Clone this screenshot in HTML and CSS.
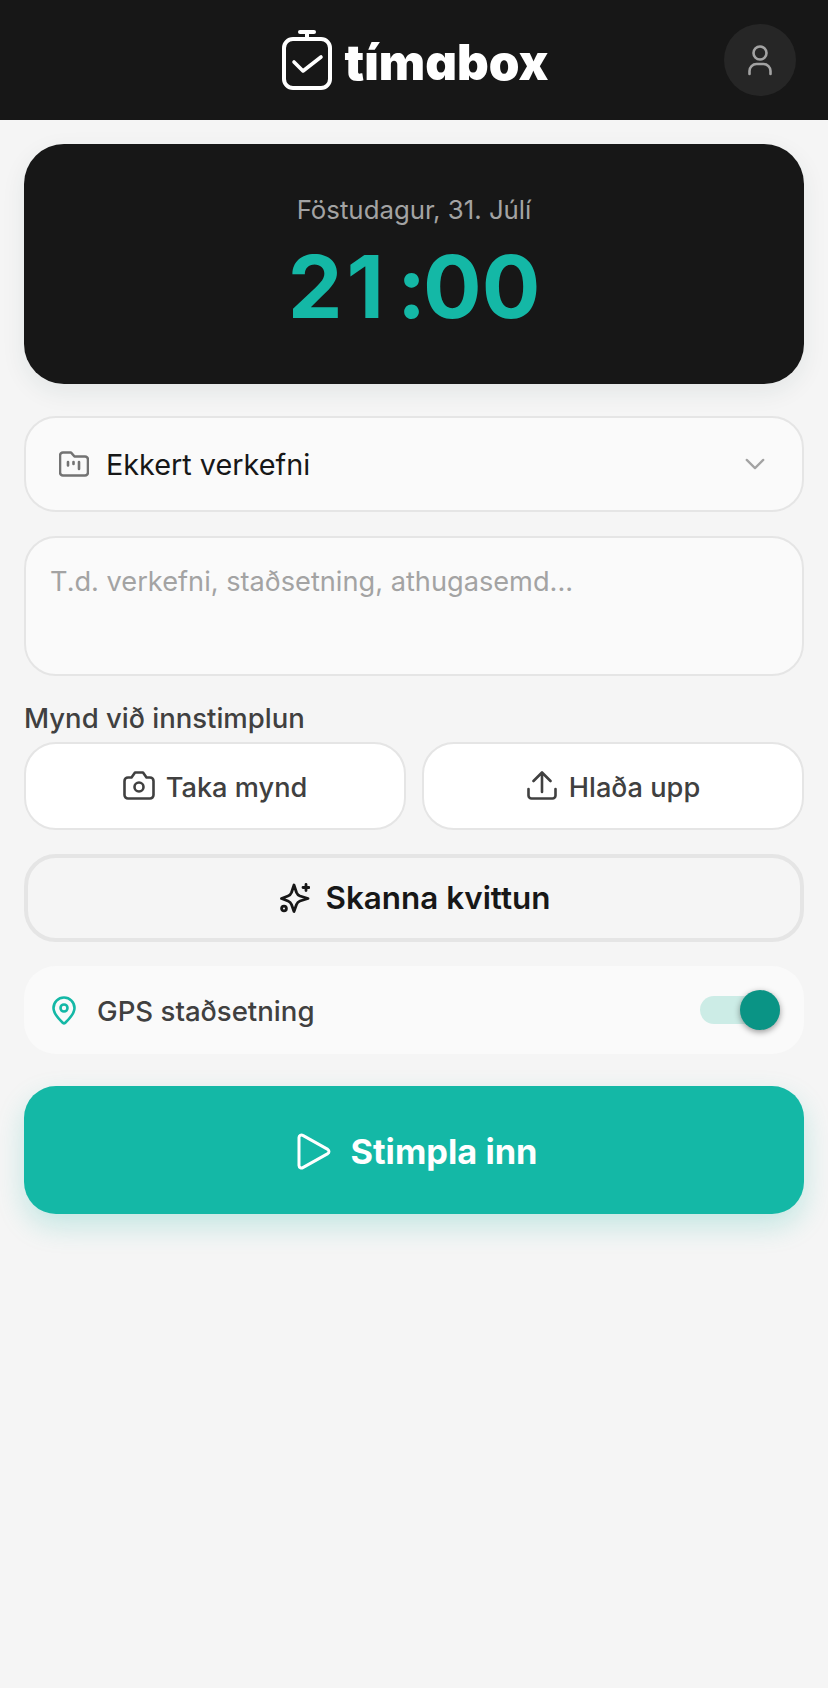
FILE: index.html
```html
<!DOCTYPE html>
<html>
<head>
  <title>Tímabox</title>
  <link rel="stylesheet" href="styles.css">
</head>
<body>
  <header class="topbar">
    <div class="logo">
      <svg class="logo-icon" viewBox="0 0 50 60" fill="none" stroke="#fff" stroke-linecap="round" stroke-linejoin="round">
        <path d="M18 2h14" stroke-width="4"/>
        <path d="M25 2v6" stroke-width="4"/>
        <rect x="2" y="9" width="46" height="49" rx="9" stroke-width="4"/>
        <path d="M12 32l9 9 18-14" stroke-width="3.600"/>
      </svg>
      <span class="logo-text">tímabox</span>
    </div>
    <button class="avatar">
      <svg viewBox="0 0 26 32" fill="none" stroke="#a3a3a3" stroke-width="2.600" stroke-linecap="round" stroke-linejoin="round">
        <circle cx="13" cy="9" r="6.500"/>
        <path d="M2.500 30v-3a7 7 0 0 1 7-7h7a7 7 0 0 1 7 7v3"/>
      </svg>
    </button>
  </header>

  <main class="content">
    <section class="clock">
      <div class="clock-date">Föstudagur, 31. Júlí</div>
      <div class="clock-time">2<span class="clock-one">1</span><span class="clock-colon">:</span>00</div>
    </section>

    <div class="select">
      <svg class="select-icon" viewBox="0 0 30 26" fill="none" stroke="#737373" stroke-width="2.600" stroke-linecap="round" stroke-linejoin="round">
        <path d="M4 24.500h22a3 3 0 0 0 3-3V8.500a3 3 0 0 0-3-3H15.500L12 1.500H4a3 3 0 0 0-3 3v17a3 3 0 0 0 3 3z"/>
        <path d="M9 11v3.500M14.500 11v2M20 11v7"/>
      </svg>
      <span class="select-label">Ekkert verkefni</span>
      <svg class="chevron" viewBox="0 0 24 24" fill="none" stroke="#a3a3a3" stroke-width="2.400" stroke-linecap="round" stroke-linejoin="round">
        <path d="M3 7.500l9 9 9-9"/>
      </svg>
    </div>

    <textarea class="note" placeholder="T.d. verkefni, staðsetning, athugasemd..."></textarea>

    <div class="photo-label">Mynd við innstimplun</div>
    <div class="photo-btns">
      <button class="btn-white">
        <svg viewBox="0 0 32 29" fill="none" stroke="#404040" stroke-width="2.600" stroke-linecap="round" stroke-linejoin="round">
          <path d="M5 27.500h22a3.500 3.500 0 0 0 3.500-3.500V10a3.500 3.500 0 0 0-3.500-3.500h-3.500L20 1.500h-8L8.500 6.500H5A3.500 3.500 0 0 0 1.500 10v14A3.500 3.500 0 0 0 5 27.500z"/>
          <circle cx="16" cy="16" r="4.500"/>
        </svg>
        Taka mynd
      </button>
      <button class="btn-white">
        <svg viewBox="0 0 30 29" fill="none" stroke="#404040" stroke-width="2.600" stroke-linecap="round" stroke-linejoin="round">
          <path d="M15 21V2M6.500 10L15 1.500 23.500 10"/>
          <path d="M1.500 18v6.500a3 3 0 0 0 3 3h21a3 3 0 0 0 3-3V18"/>
        </svg>
        Hlaða upp
      </button>
    </div>

    <button class="btn-scan">
      <svg viewBox="0 0 30 30" fill="none" stroke="#171717" stroke-width="2.800" stroke-linecap="round" stroke-linejoin="round">
        <path d="M14 2L16.500 9.500Q17.500 12 20 13L28 15.500 20 18Q17.500 19 16.500 21.500L14 28.500 11.500 21.500Q10.500 19 8 18L1.500 15.500 8 13Q10.500 12 11.500 9.500Z"/>
        <path d="M26 1.500v6M23 4.500h6"/>
        <circle cx="4" cy="25.500" r="2.400"/>
      </svg>
      Skanna kvittun
    </button>

    <div class="gps">
      <svg class="gps-icon" viewBox="0 0 24 29" fill="none" stroke="#14b8a6" stroke-width="2.600" stroke-linecap="round" stroke-linejoin="round">
        <path d="M22.500 12c0 6.500-7.500 13-9.500 15a1.500 1.500 0 0 1-2 0C9 25 1.500 18.500 1.500 12a10.500 10.500 0 0 1 21 0z"/>
        <circle cx="12" cy="12" r="3.500"/>
      </svg>
      <span class="gps-label">GPS staðsetning</span>
      <span class="toggle"><span class="toggle-knob"></span></span>
    </div>

    <button class="btn-start">
      <svg viewBox="0 0 34 37" fill="none" stroke="#fff" stroke-width="3" stroke-linecap="round" stroke-linejoin="round">
        <path d="M2 4.500a2.500 2.500 0 0 1 3.800-2.100l25 14a2.500 2.500 0 0 1 0 4.200l-25 14A2.500 2.500 0 0 1 2 32.500z"/>
      </svg>
      Stimpla inn
    </button>
  </main>
</body>
</html>
```

FILE: styles.css
```css
* {
  box-sizing: border-box;
}

html, body {
  height: 100%;
}

body {
  margin: 0;
  background: #f5f5f5;
  color: #171717;
  font-family: Inter, "Noto Sans", sans-serif;
}

button {
  font-family: inherit;
  cursor: pointer;
}

.topbar {
  position: relative;
  height: 120px;
  background: #171717;
  display: flex;
  justify-content: center;
  align-items: center;
}

.logo {
  display: flex;
  align-items: center;
  gap: 13px;
  margin-left: 2px;
}

.logo-icon {
  width: 50px;
  height: 60px;
}

.logo-text {
  color: white;
  font-size: 49.200px;
  font-weight: 900;
  line-height: 60px;
  font-feature-settings: "cv11";
  padding-top: 4px;
}

.avatar {
  position: absolute;
  right: 32px;
  top: 24px;
  width: 72px;
  height: 72px;
  border: none;
  border-radius: 50%;
  background: #262626;
  display: flex;
  align-items: center;
  justify-content: center;
  padding: 0;
}

.avatar svg {
  width: 26px;
  height: 32px;
}

.content {
  padding: 24px;
  display: flex;
  flex-direction: column;
}

.clock {
  height: 240px;
  background: #171717;
  border-radius: 40px;
  box-shadow: 0 8px 24px rgba(20, 60, 60, 0.08);
  text-align: center;
  padding-top: 48px;
}

.clock-date {
  color: #a3a3a3;
  font-size: 25.800px;
  line-height: 36px;
}

.clock-time {
  color: #14b8a6;
  font-size: 87px;
  font-weight: 700;
  line-height: 100px;
  margin-top: 9px;
}

.clock-one {
  margin: 0 13px 0 4px;
}

.clock-colon {
  margin-right: -3px;
}

.select {
  height: 96px;
  margin-top: 32px;
  background: #fafafa;
  border: 2px solid #e5e5e5;
  border-radius: 32px;
  display: flex;
  align-items: center;
  padding: 0 36px 0 33px;
}

.select-icon {
  width: 30px;
  height: 26px;
  flex: none;
}

.select-label {
  flex: 1;
  margin-left: 17px;
  font-size: 28.800px;
}

.chevron {
  width: 22px;
  height: 22px;
}

.note {
  display: block;
  height: 140px;
  margin-top: 24px;
  background: #fafafa;
  border: 2px solid #e5e5e5;
  border-radius: 32px;
  padding: 26px 24px 0;
  font-family: inherit;
  font-size: 27.200px;
  line-height: 36px;
  color: #171717;
  resize: none;
  outline: none;
}

.note::placeholder {
  color: #a3a3a3;
  opacity: 1;
}

.photo-label {
  margin-top: 24px;
  color: #404040;
  font-size: 27.500px;
  font-weight: 500;
  line-height: 36px;
}

.photo-btns {
  display: grid;
  grid-template-columns: 1fr 1fr;
  gap: 16px;
  margin-top: 6px;
}

.btn-white {
  height: 88px;
  padding: 2px 0 0;
  background: white;
  border: 2px solid #e5e5e5;
  border-radius: 32px;
  color: #404040;
  font-size: 27.200px;
  font-weight: 500;
  display: flex;
  align-items: center;
  justify-content: center;
  gap: 11px;
}

.btn-white svg {
  width: 32px;
  height: 29px;
  margin-top: -3px;
}

.btn-scan {
  height: 88px;
  margin-top: 24px;
  background: #f5f5f5;
  border: 4px solid #e5e5e5;
  border-radius: 32px;
  color: #171717;
  font-size: 31.400px;
  font-weight: 600;
  display: flex;
  align-items: center;
  justify-content: center;
  gap: 16px;
}

.btn-scan svg {
  width: 30px;
  height: 30px;
  margin-left: 2px;
}

.gps {
  height: 88px;
  margin-top: 24px;
  background: #fafafa;
  border-radius: 32px;
  display: flex;
  align-items: center;
  padding: 0 24px 0 28px;
}

.gps-icon {
  width: 24px;
  height: 29px;
  flex: none;
}

.gps-label {
  flex: 1;
  margin-left: 21px;
  padding-top: 2px;
  color: #404040;
  font-size: 27.600px;
  font-weight: 500;
}

.toggle {
  position: relative;
  width: 80px;
  height: 28px;
  border-radius: 14px;
  background: #ccece6;
}

.toggle-knob {
  position: absolute;
  right: 0;
  top: -6px;
  width: 40px;
  height: 40px;
  border-radius: 50%;
  background: #0a9485;
  box-shadow: 0 2px 6px rgba(0, 0, 0, 0.4);
}

.btn-start {
  height: 128px;
  margin-top: 32px;
  padding: 2px 0 0;
  background: #14b8a6;
  border: none;
  border-radius: 32px;
  box-shadow: 0 12px 28px rgba(20, 184, 166, 0.22);
  color: white;
  font-size: 34.400px;
  font-weight: 700;
  display: flex;
  align-items: center;
  justify-content: center;
  gap: 19px;
}

.btn-start svg {
  width: 34px;
  height: 37px;
  margin-left: 7px;
}
```
